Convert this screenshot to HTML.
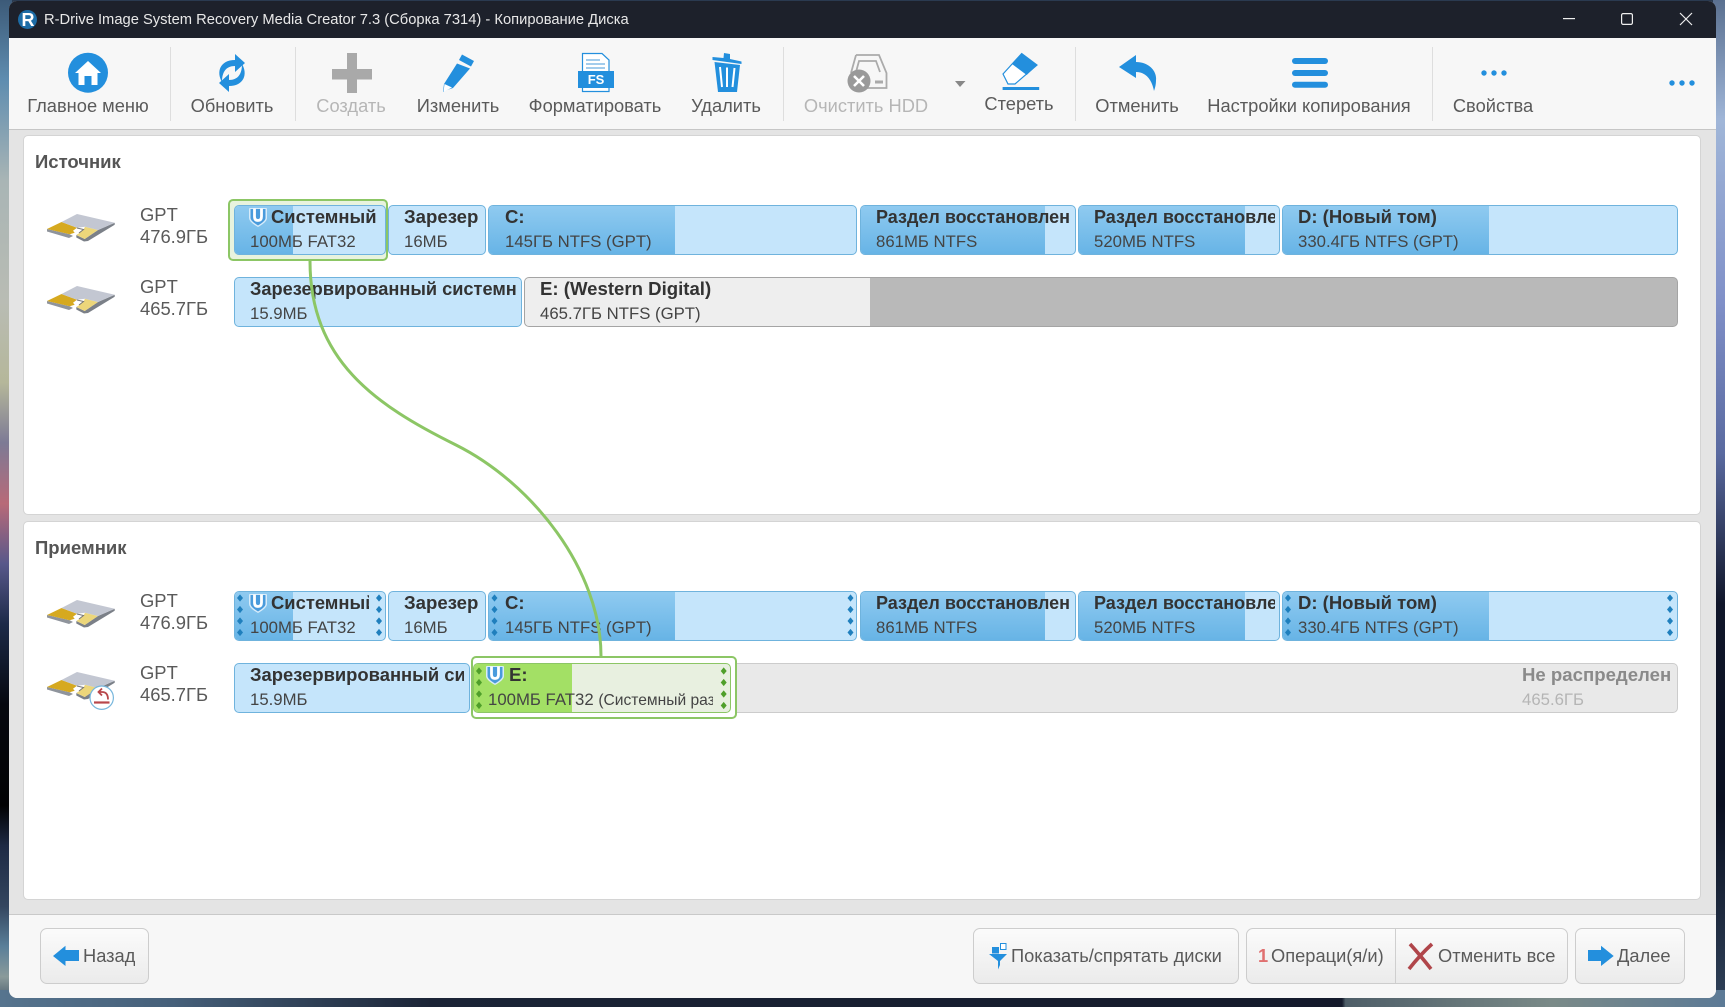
<!DOCTYPE html>
<html><head><meta charset="utf-8"><title>R-Drive Image</title>
<style>
html,body{margin:0;padding:0}
body{position:relative;width:1725px;height:1007px;overflow:hidden;font-family:"Liberation Sans",Arial,sans-serif;background:#2a3a50}
#wl{position:absolute;left:0;top:0;width:12px;height:1007px;background:linear-gradient(180deg,#3c5a78 0,#5f8db0 8%,#a9b5b5 18%,#b9bcb4 30%,#b5b79a 38%,#7d7a95 44%,#b86a78 50%,#58588a 56%,#1c2a48 62%,#06080f 70%,#020203 80%,#1e2a44 84%,#34465f 90%,#5a7f99 94%,#8a9a9a 97%,#3a4c60 100%)}
#wr{position:absolute;left:1713px;top:0;width:12px;height:1007px;background:linear-gradient(180deg,#5a7090 0,#a0b6d8 12%,#8090c8 30%,#5a6aa0 45%,#10162a 60%,#0a0f20 80%,#30425a 100%)}
#wb{position:absolute;left:0;top:990px;width:1725px;height:17px;background:linear-gradient(90deg,#56748e 0,#46607a 10%,#1b2436 25%,#141a2b 77.8%,#4e5e68 78%,#7a8a88 90%,#5c7a96 100%)}
#win{position:absolute;left:9px;top:1px;width:1707px;height:997px;background:#e4e4e4;border-radius:8px;overflow:hidden}
#tb{position:absolute;left:0;top:0;width:1707px;height:37px;background:#1d212b}
#tool{position:absolute;left:0;top:37px;width:1707px;height:91px;background:#f7f7f7;border-bottom:1px solid #c6c6c6}
#bot{position:absolute;left:0;top:913px;width:1707px;height:84px;background:#f7f7f7;border-top:1px solid #c9c9c9}
.panel{position:absolute;left:14px;width:1678px;background:#fff;border:1px solid #d4d4d4;border-radius:5px;box-sizing:border-box}
.p{position:absolute;box-sizing:border-box;border:1px solid #6fb3dd;border-radius:5px;background:#c5e5fb;overflow:hidden}
.f{position:absolute;left:0;top:0;bottom:0;background:linear-gradient(180deg,#8fcaf0,#67b4e6)}
.t{position:absolute;white-space:nowrap;overflow:hidden;line-height:24px;height:24px}
.b{font-weight:bold;font-size:18.6px;color:#333}
.s{font-size:16.75px;color:#444}
.l{font-size:18.3px;color:#5a5a5a;transform:translateX(-50%);overflow:visible}
.dis{color:#b6b6b6}
.g{font-size:18.4px;color:#5a5a5a}
.btn{position:absolute;box-sizing:border-box;top:928px;height:56px;border:1px solid #cdcdcd;border-radius:7px;background:linear-gradient(180deg,#fbfbfb,#ebebeb)}
.sep{position:absolute;top:47px;width:1px;height:74px;background:#dedede}
.bt{font-size:18.3px;color:#5a5a5a}
svg{position:absolute;left:0;top:0}
</style></head><body>
<div id="wl"></div><div id="wr"></div><div id="wb"></div>
<div id="win">
<div id="tb"></div><div id="tool"></div>
<div class="panel" style="top:134px;height:380px"></div>
<div class="panel" style="top:520px;height:379px"></div>
<div id="bot"></div>
</div>
<div class="sep" style="left:170px"></div><div class="sep" style="left:295px"></div><div class="sep" style="left:783px"></div><div class="sep" style="left:1075px"></div><div class="sep" style="left:1432px"></div>

<div class="t" style="left:44px;top:8px;font-size:14.72px;color:#e8e8e8">R-Drive Image System Recovery Media Creator 7.3 (Сборка 7314) - Копирование Диска</div>

<div class="t l" style="left:88px;top:94px">Главное меню</div>
<div class="t l" style="left:232px;top:94px">Обновить</div>
<div class="t l dis" style="left:351px;top:94px">Создать</div>
<div class="t l" style="left:458px;top:94px">Изменить</div>
<div class="t l" style="left:595px;top:94px">Форматировать</div>
<div class="t l" style="left:726px;top:94px">Удалить</div>
<div class="t l dis" style="left:866px;top:94px">Очистить HDD</div>
<div class="t l" style="left:1019px;top:92px">Стереть</div>
<div class="t l" style="left:1137px;top:94px">Отменить</div>
<div class="t l" style="left:1309px;top:94px">Настройки копирования</div>
<div class="t l" style="left:1493px;top:94px">Свойства</div>

<div class="t b" style="left:35px;top:149.5px;color:#555;font-size:18.5px">Источник</div>
<div class="t b" style="left:35px;top:535.5px;color:#555;font-size:18.5px">Приемник</div>

<div class="t g" style="left:140px;top:202.5px">GPT</div><div class="t g" style="left:140px;top:224.5px">476.9ГБ</div>
<div class="t g" style="left:140px;top:274.5px">GPT</div><div class="t g" style="left:140px;top:296.5px">465.7ГБ</div>
<div class="t g" style="left:140px;top:588.5px">GPT</div><div class="t g" style="left:140px;top:610.5px">476.9ГБ</div>
<div class="t g" style="left:140px;top:660.5px">GPT</div><div class="t g" style="left:140px;top:682.5px">465.7ГБ</div>

<!-- source row 1 selection -->
<div style="position:absolute;left:228px;top:199px;width:160px;height:62px;box-sizing:border-box;border:2px solid #8cc665;border-radius:5px;background:#e8f3de"></div>
<div class="p" style="left:234px;top:205px;width:152px;height:50px"><div class="f" style="width:58px"></div></div>
<div class="p" style="left:388px;top:205px;width:98px;height:50px"></div>
<div class="p" style="left:488px;top:205px;width:369px;height:50px"><div class="f" style="width:186px"></div></div>
<div class="p" style="left:860px;top:205px;width:216px;height:50px"><div class="f" style="width:184px"></div></div>
<div class="p" style="left:1078px;top:205px;width:202px;height:50px"><div class="f" style="width:166px"></div></div>
<div class="p" style="left:1282px;top:205px;width:396px;height:50px"><div class="f" style="width:206px"></div></div>
<!-- source row 2 -->
<div class="p" style="left:234px;top:277px;width:288px;height:50px"></div>
<div class="p" style="left:524px;top:277px;width:1154px;height:50px;background:#b9b9b9;border-color:#a4a4a4"><div style="position:absolute;left:0;top:0;bottom:0;width:345px;background:#eeeeee"></div></div>
<!-- target row 1 -->
<div class="p" style="left:234px;top:591px;width:152px;height:50px"><div class="f" style="width:58px"></div></div>
<div class="p" style="left:388px;top:591px;width:98px;height:50px"></div>
<div class="p" style="left:488px;top:591px;width:369px;height:50px"><div class="f" style="width:186px"></div></div>
<div class="p" style="left:860px;top:591px;width:216px;height:50px"><div class="f" style="width:184px"></div></div>
<div class="p" style="left:1078px;top:591px;width:202px;height:50px"><div class="f" style="width:166px"></div></div>
<div class="p" style="left:1282px;top:591px;width:396px;height:50px"><div class="f" style="width:206px"></div></div>
<!-- target row 2 -->
<div class="p" style="left:700px;top:663px;width:978px;height:50px;background:#e9e9e9;border-color:#cccccc"></div>
<div class="p" style="left:234px;top:663px;width:236px;height:50px"></div>
<div style="position:absolute;left:470.5px;top:656px;width:266.5px;height:63px;box-sizing:border-box;border:2.5px solid #8cc665;border-radius:5px;background:#fff"></div>
<div class="p" style="left:473px;top:663px;width:258px;height:50px;border-color:#8cc665;background:#e8f0e0"><div class="f" style="width:98px;background:#a3e065"></div></div>

<!-- partition text: source 1 -->
<div class="t b" style="left:271px;top:205px;width:110px;font-size:18.4px">Системный</div><div class="t s" style="left:250px;top:230px;width:130px">100МБ FAT32</div>
<div class="t b" style="left:404px;top:205px;width:78px">Зарезер</div><div class="t s" style="left:404px;top:230px">16МБ</div>
<div class="t b" style="left:505px;top:205px">C:</div><div class="t s" style="left:505px;top:230px">145ГБ NTFS (GPT)</div>
<div class="t b" style="left:876px;top:205px;width:195px;font-size:18px">Раздел восстановлен</div><div class="t s" style="left:876px;top:230px">861МБ NTFS</div>
<div class="t b" style="left:1094px;top:205px;width:181px;font-size:18px">Раздел восстановлен</div><div class="t s" style="left:1094px;top:230px">520МБ NTFS</div>
<div class="t b" style="left:1298px;top:205px;font-size:18.5px">D: (Новый том)</div><div class="t s" style="left:1298px;top:230px">330.4ГБ NTFS (GPT)</div>
<!-- source 2 -->
<div class="t b" style="left:250px;top:277px;width:267px;font-size:18.2px">Зарезервированный системный</div><div class="t s" style="left:250px;top:302px">15.9МБ</div>
<div class="t b" style="left:540px;top:277px">E: (Western Digital)</div><div class="t s" style="left:540px;top:302px">465.7ГБ NTFS (GPT)</div>
<!-- target 1 -->
<div class="t b" style="left:271px;top:591px;width:98px;font-size:18.4px">Системный</div><div class="t s" style="left:250px;top:616px;width:130px">100МБ FAT32</div>
<div class="t b" style="left:404px;top:591px;width:78px">Зарезер</div><div class="t s" style="left:404px;top:616px">16МБ</div>
<div class="t b" style="left:505px;top:591px">C:</div><div class="t s" style="left:505px;top:616px">145ГБ NTFS (GPT)</div>
<div class="t b" style="left:876px;top:591px;width:195px;font-size:18px">Раздел восстановлен</div><div class="t s" style="left:876px;top:616px">861МБ NTFS</div>
<div class="t b" style="left:1094px;top:591px;width:181px;font-size:18px">Раздел восстановлен</div><div class="t s" style="left:1094px;top:616px">520МБ NTFS</div>
<div class="t b" style="left:1298px;top:591px;font-size:18.5px">D: (Новый том)</div><div class="t s" style="left:1298px;top:616px">330.4ГБ NTFS (GPT)</div>
<!-- target 2 -->
<div class="t b" style="left:250px;top:663px;width:214px;font-size:18.4px">Зарезервированный система</div><div class="t s" style="left:250px;top:688px">15.9МБ</div>
<div class="t b" style="left:509px;top:663px">E:</div><div class="t s" style="left:488px;top:688px;width:225px">100МБ FAT32 <span style="font-size:15.6px">(Системный раздел)</span></div>
<div class="t b" style="left:1522px;top:663px;color:#8a8a8a">Не распределен</div><div class="t s" style="left:1522px;top:688px;color:#b5b5b5">465.6ГБ</div>

<!-- bottom buttons -->
<div class="btn" style="left:40px;width:109px"></div>
<div class="btn" style="left:973px;width:266px"></div>
<div class="btn" style="left:1246px;width:322px"></div>
<div style="position:absolute;left:1395px;top:929px;width:1px;height:54px;background:#cfcfcf"></div>
<div class="btn" style="left:1575px;width:110px"></div>
<div class="t bt" style="left:83px;top:944px">Назад</div>
<div class="t bt" style="left:1011px;top:944px">Показать/спрятать диски</div>
<div class="t bt" style="left:1258px;top:944px;color:#e07070;font-weight:bold">1</div>
<div class="t bt" style="left:1271px;top:944px">Операци(я/и)</div>
<div class="t bt" style="left:1438px;top:944px">Отменить все</div>
<div class="t bt" style="left:1617px;top:944px">Далее</div>

<svg width="1725" height="1007" viewBox="0 0 1725 1007" xmlns="http://www.w3.org/2000/svg">
<defs>
<g id="disk">
<path d="M0 15 V17.5 L22 24 L26 22 L22.7 20.3Z" fill="#8f949c"/>
<path d="M29.3 21 V23.5 L37 27.5 L41 27 L67.7 10.7 V8.7 L51 16 L37.7 25Z" fill="#7b8088"/>
<path d="M0 15 L22.7 20.3 L27.7 18.7 L26 16.7 L30 13.7 L14.5 8Z" fill="#d6a91f"/>
<path d="M36.7 15.3 L32 19.3 L29.3 21 L37.7 25 L51 16 L38 12.7Z" fill="#ecd67a"/>
<path d="M14.5 8 L30 0 L67.7 8.7 L51 16 L38 12.7 L30 13.7Z" fill="#c3c7d2"/>
<path d="M30 14 L36.5 15.5 L32 19" fill="none" stroke="#777" stroke-width="1"/>
</g>
<g id="shield"><path d="M0 1 Q0 0 1 0 H17 Q18 0 18 1 V10 Q18 14 9 19 Q0 14 0 10Z" fill="#d8ecfa"/><path d="M1.5 1 H16.5 V10 Q16.5 13 9 17.5 Q1.5 13 1.5 10Z" fill="#4a9bdc"/><path d="M5.5 0.5 V8.5 Q5.5 12.5 9 12.5 Q12.5 12.5 12.5 8.5 V0.5" fill="none" stroke="#fff" stroke-width="2.8"/></g>
<polygon id="dm" points="0,-3.6 3,0 0,3.6 -3,0"/>
<g id="dc"><use href="#dm" y="0"/><use href="#dm" y="11.5"/><use href="#dm" y="23"/><use href="#dm" y="34.5"/></g>
</defs>

<!-- logo -->
<circle cx="27.5" cy="19.5" r="9.5" fill="#1c6ca6"/>
<text x="28" y="26" font-family="Liberation Sans" font-weight="bold" font-size="18" fill="#fff" text-anchor="middle">R</text>
<!-- window controls -->
<rect x="1563" y="18" width="12" height="1.2" fill="#eee"/>
<rect x="1621.6" y="13.6" width="10.8" height="10.8" rx="1.5" fill="none" stroke="#eee" stroke-width="1.2"/>
<path d="M1680 13 L1692 25 M1692 13 L1680 25" stroke="#eee" stroke-width="1.2" fill="none"/>

<!-- home -->
<circle cx="88" cy="72.7" r="20" fill="#238fdd"/>
<path d="M88 61 L101 73 H97.5 V85 H91.5 V76 H84.5 V85 H78.5 V73 H75 Z" fill="#fff"/>
<!-- refresh -->
<path d="M222 82 C216 72 220 60 235 60 L235 54 L245 63 L235 72 L235 66 C226 66 222 72 222 82Z" fill="#238fdd"/>
<path d="M242 64 C248 74 244 86 229 86 L229 92 L219 83 L229 74 L229 80 C238 80 242 74 242 64Z" fill="#238fdd"/>
<!-- plus -->
<path d="M332 69 H347 V53 H357 V69 H372 V79.5 H357 V93 H347 V79.5 H332Z" fill="#a9a9a9"/>
<!-- pencil -->
<path d="M457 63.5 L470 68.5 L453 88 L447 90 L443 92 L444 84Z" fill="#238fdd"/>
<path d="M444.5 84 L452 87.5 L443.5 92Z" fill="#fff"/>
<path d="M459 60 L462 54.5 L474 61 L471 66.5Z" fill="#238fdd"/>
<!-- format -->
<path d="M582.5 53.5 H602 L609 60 V91.5 H582.5Z" fill="#fff" stroke="#238fdd" stroke-width="1.2"/>
<path d="M586 60 H600 M586 64 H605 M586 68 H605" stroke="#6aaee0" stroke-width="1.2"/>
<rect x="578" y="71" width="36" height="17" fill="#238fdd"/>
<text x="596" y="84" font-family="Liberation Sans" font-weight="bold" font-size="13" fill="#fff" text-anchor="middle">FS</text>
<!-- trash -->
<path d="M712.5 57 L723.5 58 L724 53 L730 54 L730 59 L741.5 61.5 V64 L712.5 60Z" fill="#238fdd"/>
<path d="M714.5 62 L740 65 L737 92 H718Z" fill="#238fdd"/>
<path d="M720 67 L722 87 M727 67.5 V87 M734.5 68 L732.5 87" stroke="#fff" stroke-width="2" fill="none"/>
<!-- clear HDD -->
<path d="M856 55 H879 L886.5 73 V88 H860 M851 73 L856 55 M856 72 L859 61 H876 L880 72" fill="none" stroke="#ababab" stroke-width="1.8"/>
<circle cx="859" cy="81" r="11.5" fill="#9a9a9a"/>
<path d="M854 76 L864 86 M864 76 L854 86" stroke="#fff" stroke-width="2.6"/>
<rect x="875" y="80.5" width="8" height="3" fill="#aaa"/>
<polygon points="955,81 965.5,81 960,87" fill="#888"/>
<!-- eraser -->
<path d="M1003 74 L1021.7 53.5 L1037 65 L1015 84 H1008Z" fill="#fff" stroke="#238fdd" stroke-width="1.2"/>
<path d="M1012 64 L1021.7 53.5 L1037 65 L1026.7 75Z" fill="#238fdd"/>
<rect x="1002.6" y="87" width="36.6" height="3" fill="#238fdd"/>
<!-- undo -->
<path d="M1119 67 L1136 55 V62 C1150 62 1157 72 1156 80 C1156 85 1155 88 1154 91 C1152 80 1146 72 1136 72 V78Z" fill="#238fdd"/>
<!-- hamburger -->
<rect x="1292" y="58" width="36" height="6" rx="3" fill="#238fdd"/><rect x="1292" y="70" width="36" height="6" rx="3" fill="#238fdd"/><rect x="1292" y="81.7" width="36" height="6" rx="3" fill="#238fdd"/>
<g fill="#238fdd"><circle cx="1484" cy="73" r="2.7"/><circle cx="1494" cy="73" r="2.7"/><circle cx="1504" cy="73" r="2.7"/><circle cx="1672" cy="83" r="2.7"/><circle cx="1682" cy="83" r="2.7"/><circle cx="1692" cy="83" r="2.7"/></g>

<!-- disks -->
<use href="#disk" x="47" y="214"/><use href="#disk" x="47" y="286"/><use href="#disk" x="47" y="600"/><use href="#disk" x="47" y="672"/>
<circle cx="101.7" cy="697.7" r="11.7" fill="#fff" stroke="#77b6dc" stroke-width="1.2"/>
<path d="M94 702.5 H109.5" fill="none" stroke="#b8474b" stroke-width="2.2"/>
<path d="M108 699.5 Q108 692 102 692 H99 M102 688.5 L98.5 692 L102 695.5" fill="none" stroke="#b8474b" stroke-width="1.8"/>

<!-- shields -->
<use href="#shield" x="249" y="208"/><use href="#shield" x="249" y="594"/><use href="#shield" x="486" y="666"/>

<!-- handles -->
<g fill="#1f7fbd"><use href="#dc" x="240" y="598"/><use href="#dc" x="379" y="598"/><use href="#dc" x="494.5" y="598"/><use href="#dc" x="850.5" y="598"/><use href="#dc" x="1288" y="598"/><use href="#dc" x="1670" y="598"/></g>
<g fill="#4f9f2a"><use href="#dc" x="479" y="671"/><use href="#dc" x="723.7" y="671"/></g>

<!-- connector -->
<path d="M310 261 C310 360 375 405 456 445 C532 483 601 570 601 656" fill="none" stroke="#8cc665" stroke-width="3"/>

<!-- bottom icons -->
<path d="M53 956 L65.5 945.7 V950 H79 V961 H65.5 V966Z" fill="#238fdd"/>
<path d="M1613.7 956 L1601 945.7 V950 H1588 V961 H1601 V966Z" fill="#238fdd"/>
<path d="M989 954 H1007 L1000 961 V965 L998 969.5 V961Z" fill="#238fdd"/>
<rect x="992" y="947" width="7" height="6.5" fill="#238fdd"/>
<rect x="1000.5" y="943.5" width="5.5" height="6" fill="#fff" stroke="#238fdd" stroke-width="1"/>
<path d="M1410 944 Q1420 955 1431 969 M1432 944 Q1420 955 1409 969" fill="none" stroke="#b0454a" stroke-width="3.6"/>
</svg>
</body></html>
